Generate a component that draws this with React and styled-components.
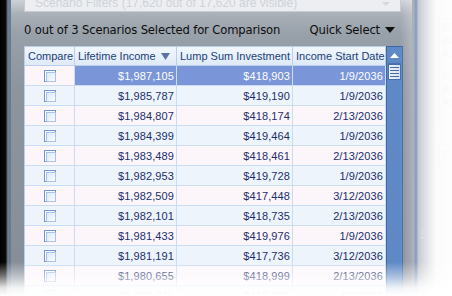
import React from 'react'
import styled, { createGlobalStyle } from 'styled-components'

const rows = [
  ['$1,987,105', '$418,903', '1/9/2036'],
  ['$1,985,787', '$419,190', '1/9/2036'],
  ['$1,984,807', '$418,174', '2/13/2036'],
  ['$1,984,399', '$419,464', '1/9/2036'],
  ['$1,983,489', '$418,461', '2/13/2036'],
  ['$1,982,953', '$419,728', '1/9/2036'],
  ['$1,982,509', '$417,448', '3/12/2036'],
  ['$1,982,101', '$418,735', '2/13/2036'],
  ['$1,981,433', '$419,976', '1/9/2036'],
  ['$1,981,191', '$417,736', '3/12/2036'],
  ['$1,980,655', '$418,999', '2/13/2036'],
  ['$1,980,311', '$416,735', '4/9/2036'],
]

function App() {
  return (
    <Screen>
      <Global />
      <LeftEdge />
      <MainPanel>
        <FilterBox>
          <span>Scenario Filters (17,620 out of 17,620 are visible)</span>
          <FilterArrow />
        </FilterBox>
        <TitleBar>
          <span>0 out of 3 Scenarios Selected for Comparison</span>
          <QuickSelect>Quick Select <DarkArrow /></QuickSelect>
        </TitleBar>
        <Grid>
          <Table>
            <HeaderRow>
              <HeadCell>Compare</HeadCell>
              <HeadCell sort>
                Lifetime Income
                <svg width="9" height="7" viewBox="0 0 9 7"><path d="M0 0 L9 0 L4.5 7 Z" fill="#5b73a0" /></svg>
              </HeadCell>
              <HeadCell>Lump Sum Investment</HeadCell>
              <HeadCell>Income Start Date</HeadCell>
            </HeaderRow>
            {rows.map((r, i) => (
              <Row key={i} alt={i % 2 === 1}>
                <CheckCell><Check /></CheckCell>
                {r.map((v, j) => (
                  <Cell key={j} selected={i === 0}>{v}</Cell>
                ))}
              </Row>
            ))}
          </Table>
          <ScrollBar>
            <ScrollUp>
              <svg width="9" height="5" viewBox="0 0 9 5"><path d="M0 5 L4.5 0 L9 5 Z" fill="#fff" /></svg>
            </ScrollUp>
            <Thumb>
              <Grip /><Grip /><Grip /><Grip />
            </Thumb>
          </ScrollBar>
        </Grid>
      </MainPanel>
      <Splitter>
        <Dots>⋮</Dots>
      </Splitter>
      <SidePanel>
        <GroupBox>
          <Faint>Bo</Faint>
          <Faint>At</Faint>
          <Faint>At</Faint>
          <Gap />
          <Faint>Sp</Faint>
          <Faint>At</Faint>
          <Faint>At</Faint>
        </GroupBox>
        <Tab>Ch</Tab>
      </SidePanel>
      <Fade />
    </Screen>
  )
}

export default App

const Global = createGlobalStyle`
  body { margin: 0; background: #fff; }
  * { box-sizing: border-box; }
`

const Screen = styled.div`
  position: relative;
  width: 452px;
  height: 296px;
  overflow: hidden;
  display: flex;
  font-family: "Liberation Sans", Arial, sans-serif;
  background: #fff;
`

const LeftEdge = styled.div`
  width: 11px;
  flex-shrink: 0;
  background: linear-gradient(to right, #000 0, #0a0a0a 6px, #5a636d 7px, #7b848e 9px, #4f6f9e 10px, #7d8690 11px);
`

const MainPanel = styled.div`
  width: 401px;
  flex-shrink: 0;
  padding-left: 13px;
  background: linear-gradient(to bottom, #cdd2d8 0, #a9b0b8 14px, #98a0a9 34px, #8c949e 90px, #858e98 296px);
  display: flex;
  flex-direction: column;
  & > * { flex-shrink: 0; }
`

const FilterBox = styled.div`
  margin-top: -9px;
  height: 21px;
  width: 377px;
  border: 1px solid #c8ccd2;
  background: #eceef1;
  color: #cfd3d9;
  font-size: 12px;
  display: flex;
  align-items: flex-end;
  justify-content: space-between;
  padding: 0 10px 1px 10px;
`

const FilterArrow = styled.div`
  width: 0;
  height: 0;
  margin-bottom: 4px;
  border-left: 4px solid transparent;
  border-right: 4px solid transparent;
  border-top: 4px solid #d4d8dd;
`

const TitleBar = styled.div`
  height: 34px;
  width: 379px;
  display: flex;
  align-items: center;
  justify-content: space-between;
  font-family: "DejaVu Sans", Verdana, sans-serif;
  font-size: 11.6px;
  letter-spacing: -0.15px;
  color: #0d0d0d;
  padding-right: 8px;
  padding-top: 1px;
`

const QuickSelect = styled.span`
  display: flex;
  align-items: center;
  gap: 5px;
`

const DarkArrow = styled.span`
  width: 0;
  height: 0;
  border-left: 5px solid transparent;
  border-right: 5px solid transparent;
  border-top: 6px solid #111;
`

const Grid = styled.div`
  display: flex;
  width: 379px;
`

const Table = styled.div`
  width: 362px;
  background: #fbf6fb;
  border-left: 1px solid #b9cfea;
  border-top: 1px solid #b9cfea;
`

const cols = '50px 102px 116px 93px'

const HeaderRow = styled.div`
  display: grid;
  grid-template-columns: ${cols};
  height: 19px;
  background: linear-gradient(to bottom, #f2f7fd, #dfeaf7);
  border-bottom: 1px solid #b9cfea;
`

const HeadCell = styled.div`
  font-size: 11px;
  color: #213e78;
  border-right: 1px solid #b9cfea;
  display: flex;
  align-items: center;
  justify-content: ${p => (p.sort ? 'space-between' : 'flex-start')};
  padding: 0 6px 0 3px;
  white-space: nowrap;
  overflow: hidden;
  &:last-child { padding-right: 0; }
`

const Row = styled.div`
  display: grid;
  grid-template-columns: ${cols};
  height: 20px;
  background: ${p => (p.alt ? '#eef4fc' : '#fcf6fb')};
  border-bottom: 1px solid #c9dcf1;
`

const CheckCell = styled.div`
  border-right: 1px solid #c9dcf1;
  display: flex;
  align-items: center;
  justify-content: center;
`

const Check = styled.div`
  width: 12px;
  height: 12px;
  border: 1px solid #6f96cf;
  background: #fff;
  padding: 1px;
  &::after {
    content: '';
    display: block;
    width: 100%;
    height: 100%;
    border: 1px solid #a9c2e6;
    background: linear-gradient(135deg, #dfe9f8, #f8fbff);
  }
`

const Cell = styled.div`
  border-right: 1px solid #c9dcf1;
  display: flex;
  align-items: center;
  justify-content: flex-end;
  padding-right: 2px;
  font-size: 11px;
  letter-spacing: 0.1px;
  color: ${p => (p.selected ? '#fff' : '#1b2f6b')};
  background: ${p => (p.selected ? '#7b96d8' : 'transparent')};
`

const ScrollBar = styled.div`
  width: 17px;
  background: #5e89c5;
  border: 1px solid #3e67a6;
  display: flex;
  flex-direction: column;
  padding: 1px;
`

const ScrollUp = styled.div`
  height: 16px;
  display: flex;
  align-items: center;
  justify-content: center;
  border-bottom: 1px solid #4a74b1;
`

const Thumb = styled.div`
  height: 16px;
  background: linear-gradient(to right, #eef3fb, #d4e0f2);
  border: 1px solid #4670ad;
  display: flex;
  flex-direction: column;
  align-items: center;
  justify-content: center;
  gap: 2px;
`

const Grip = styled.div`
  width: 9px;
  height: 1px;
  background: #4a6da3;
`

const Splitter = styled.div`
  width: 22px;
  flex-shrink: 0;
  background: linear-gradient(to right, #8a929c 0, #8a929c 2px, #4d70a8 3px, #4d70a8 5px, #9ea6b0 6px, #b4bbc3 14px, #dfe2e6 22px);
  display: flex;
  align-items: center;
  padding-left: 5px;
  padding-top: 170px;
`

const Dots = styled.span`
  color: #c9cfd6;
  font-size: 10px;
  font-weight: bold;
`

const SidePanel = styled.div`
  flex: 1;
  background: #f1f2f4;
  padding: 18px 0 0 4px;
  display: flex;
  flex-direction: column;
  gap: 22px;
  border-left: 1px solid #e2e5e9;
`

const GroupBox = styled.div`
  border: 1px solid #e3e5e8;
  padding: 2px 2px 12px 2px;
  display: flex;
  flex-direction: column;
  font-size: 11px;
  line-height: 13px;
  overflow: hidden;
`

const Faint = styled.span`
  color: #d6d9dd;
`

const Gap = styled.div`
  height: 10px;
`

const Tab = styled.div`
  border: 1px solid #e3e5e8;
  border-bottom: none;
  height: 22px;
  padding: 4px 0 0 3px;
  font-size: 11px;
  color: #dcdfe2;
  overflow: hidden;
`

const Fade = styled.div`
  position: absolute;
  inset: 0;
  pointer-events: none;
  background:
    linear-gradient(to bottom, rgba(255,255,255,0) 262px, rgba(255,255,255,0.45) 276px, rgba(255,255,255,0.9) 288px, #fff 296px),
    linear-gradient(to right, rgba(255,255,255,0) 400px, rgba(255,255,255,0.55) 425px, rgba(255,255,255,0.9) 452px);
`
